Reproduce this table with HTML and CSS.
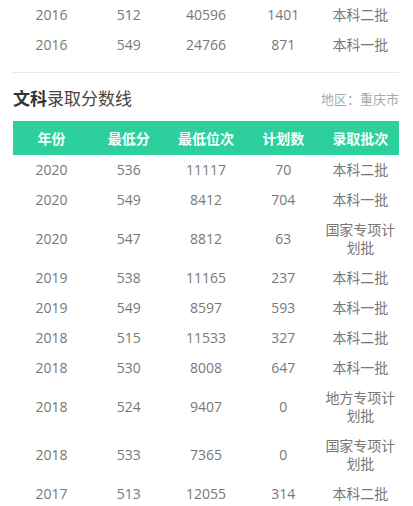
FILE: index.html
```html
<!DOCTYPE html>
<html lang="zh-CN">
<head>
<meta charset="utf-8">
<link rel="stylesheet" href="styles.css">
</head>
<body>
<div class="page">
  <table class="score">
    <tbody>
      <tr><td>2016</td><td>512</td><td>40596</td><td>1401</td><td>本科二批</td></tr>
      <tr><td>2016</td><td>549</td><td>24766</td><td>871</td><td>本科一批</td></tr>
    </tbody>
  </table>
  <div class="divider"></div>
  <div class="section-head">
    <h2 class="title"><b>文科</b>录取分数线</h2>
    <span class="region">地区：重庆市</span>
  </div>
  <table class="score">
    <thead>
      <tr><th>年份</th><th>最低分</th><th>最低位次</th><th>计划数</th><th>录取批次</th></tr>
    </thead>
    <tbody>
      <tr><td>2020</td><td>536</td><td>11117</td><td>70</td><td>本科二批</td></tr>
      <tr><td>2020</td><td>549</td><td>8412</td><td>704</td><td>本科一批</td></tr>
      <tr><td>2020</td><td>547</td><td>8812</td><td>63</td><td>国家专项计划批</td></tr>
      <tr><td>2019</td><td>538</td><td>11165</td><td>237</td><td>本科二批</td></tr>
      <tr><td>2019</td><td>549</td><td>8597</td><td>593</td><td>本科一批</td></tr>
      <tr><td>2018</td><td>515</td><td>11533</td><td>327</td><td>本科二批</td></tr>
      <tr><td>2018</td><td>530</td><td>8008</td><td>647</td><td>本科一批</td></tr>
      <tr><td>2018</td><td>524</td><td>9407</td><td>0</td><td>地方专项计划批</td></tr>
      <tr><td>2018</td><td>533</td><td>7365</td><td>0</td><td>国家专项计划批</td></tr>
      <tr><td>2017</td><td>513</td><td>12055</td><td>314</td><td>本科二批</td></tr>
    </tbody>
  </table>
</div>
</body>
</html>
```

FILE: styles.css
```css
html, body {
  margin: 0;
  padding: 0;
  background: #ffffff;
}
body {
  font-family: "Open Sans", "Noto Sans CJK SC", sans-serif;
  color: #787878;
  font-size: 14px;
}
.page {
  padding: 0 14px 0 13px;
}
.score {
  width: 100%;
  border-collapse: collapse;
  table-layout: fixed;
}
.score th,
.score td {
  padding: 6px 0;
  line-height: 18px;
  text-align: center;
  vertical-align: middle;
  font-size: 14px;
  font-weight: normal;
}
.score thead th {
  background: #2dcf9d;
  color: #f4fffb;
  font-weight: bold;
  height: 22px;
  padding: 6px 0;
  font-family: "Noto Sans CJK SC", sans-serif;
}
.divider {
  margin-top: 12px;
  border-top: 1px solid #e9e9e9;
}
.section-head {
  height: 48px;
  display: flex;
  align-items: center;
  justify-content: space-between;
}
.title {
  margin: 0;
  font-size: 17px;
  font-weight: normal;
  color: #444444;
  font-family: "Noto Sans CJK SC", sans-serif;
  line-height: 24px;
  position: relative;
  top: 1px;
}
.title b {
  font-weight: bold;
  color: #333333;
}
.region {
  font-size: 13px;
  color: #aaaaaa;
  font-family: "Noto Sans CJK SC", sans-serif;
  position: relative;
  top: 1px;
}
```
